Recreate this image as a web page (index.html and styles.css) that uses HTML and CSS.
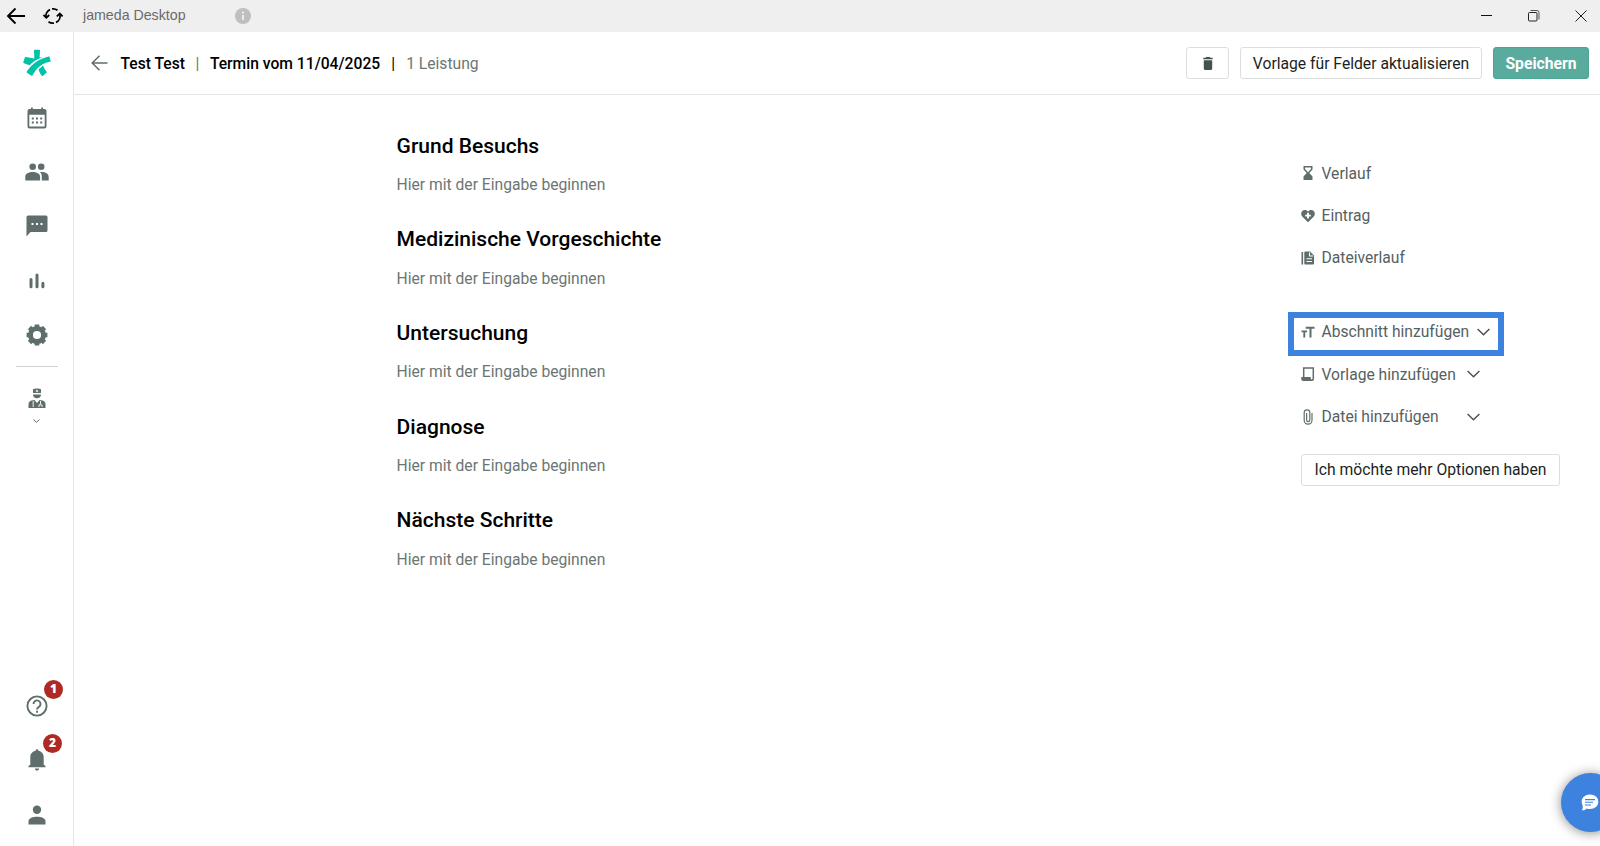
FILE: index.html
```html
<!DOCTYPE html>
<html lang="de">
  <head>
    <meta charset="UTF-8" />
    <meta name="viewport" content="width=device-width, initial-scale=1.0" />
    <title>jameda Desktop</title>
    <link rel="stylesheet" href="styles.css">
  </head>
  <body>
    <div class="titlebar">
      <svg class="tb-back" width="20" height="18" viewBox="0 0 20 18"><path d="M9.500 1.500 2 9l7.500 7.500M2 9h17" fill="none" stroke="#000" stroke-width="1.900"/></svg>
      <svg class="tb-reload" width="20" height="18" viewBox="0 0 20 18" fill="none" stroke="#000" stroke-width="1.800"><path d="M3.100 10.500A7 7 0 0 1 7 2.600M9 1.900A7 7 0 0 1 14.500 3.300M16.900 7.500A7 7 0 0 1 13 15.400M11 16.100A7 7 0 0 1 5.500 14.700"/><path d="M.4 8 3.300 10.800 6.200 8M13.800 9.300 16.800 6.600 19.600 9.300"/></svg>
      <span class="tb-title">jameda Desktop</span>
      <svg class="tb-info" width="16" height="16" viewBox="0 0 16 16"><circle cx="8" cy="8" r="8" fill="#bfbfbf"/><path d="M8 3.600v1.900M8 7v5" stroke="#efefef" stroke-width="1.900"/></svg>
      <div class="window-buttons">
        <svg width="12" height="12" viewBox="0 0 12 12"><path d="M0 5.500h11" stroke="#111"/></svg>
        <svg width="12" height="12" viewBox="0 0 12 12" fill="none" stroke="#222"><rect x=".5" y="2.500" width="8.500" height="8.500" rx="1"/><path d="M2.500.5H9a2 2 0 0 1 2 2v7" stroke="#555"/></svg>
        <svg width="12" height="12" viewBox="0 0 12 12"><path d="m.5.500 11 11m0-11-11 11" stroke="#222"/></svg>
      </div>
    </div>

    <div class="app">
      <nav class="sidebar">
        <a class="nav-item logo">
          <svg width="28" height="28" viewBox="0 0 28 28"><path d="M11.800.8h4.400c.5 0 .8.300.8.800l-.4 6.900 3.200-.3C14 10 10 12.700 6.600 16.200L.9 14.200c-.5-.2-.7-.5-.6-1L1.800 8.500c.2-.5.500-.7 1-.6l8.500 1.600L11 1.600c0-.5.300-.8.800-.8z"/><path d="M26.300 7.200 27.800 12.400C19 14 13.500 18.500 9.600 26.300c-.3.600-.7.700-1.200.4L4 23.700c-.5-.4-.6-.8-.2-1.300C9 14.500 15.500 10 26.300 7.200z"/><path d="M20 16.500c.9 2.500 2.200 4.500 4 6.700L20 26.800c-.4.300-.8.300-1.100 0-1.500-1.700-2.600-3.800-3.400-6.300z"/></svg>
        </a>
        <a class="nav-item">
          <svg width="20" height="22" viewBox="0 0 20 22"><path d="M4 .5h1.800V2h8.400V.5H16V2h1.500A2 2 0 0 1 19.500 4v15.500a2 2 0 0 1-2 2h-15a2 2 0 0 1-2-2V4a2 2 0 0 1 2-2H4zM2.300 7.800v11.800h15.400V7.800z" fill-rule="evenodd"/><path d="M4.800 10.500h2v2h-2zm4.200 0h2v2H9zm4.200 0h2v2h-2zm-8.400 4h2v2h-2zm4.200 0h2v2H9zm4.200 0h2v2h-2z"/></svg>
        </a>
        <a class="nav-item">
          <svg width="24" height="18" viewBox="0 0 24 18"><circle cx="7.700" cy="3.700" r="3.300"/><circle cx="16.200" cy="3.700" r="3.300"/><path d="M.3 17.500v-3.800C.3 10.500 4 9 7.700 9s7.400 1.500 7.400 4.700v3.800zM15 9c5-.4 8.700 1.300 8.700 4.700v3.800h-6.900v-3.800c0-2-.6-3.500-1.800-4.700z"/></svg>
        </a>
        <a class="nav-item">
          <svg width="22" height="22" viewBox="0 0 22 22"><path d="M2 .5h18a1.500 1.500 0 0 1 1.500 1.500v13.500A1.500 1.500 0 0 1 20 17H4.500L.5 21.500V2A1.500 1.500 0 0 1 2 .5z"/><path d="M5.500 8h2v2h-2zm4.500 0h2v2h-2zm4.500 0h2v2h-2z" fill="#fff"/></svg>
        </a>
        <a class="nav-item">
          <svg width="16" height="16" viewBox="0 0 16 16" stroke="#5f6e6c" stroke-width="3" stroke-linecap="round"><path d="M2 6.500v7.300M8 2v11.800M13.900 10.300v3.500"/></svg>
        </a>
        <a class="nav-item">
          <svg class="outline" width="22" height="22" viewBox="0 0 22 22" stroke="#5f6e6c"><circle cx="11" cy="11" r="6.600" stroke-width="5"/><path d="M11 .6v4M11 17.400v4M.6 11h4M17.400 11h4M3.500 3.500l2.800 2.800M15.700 15.700l2.800 2.800M3.500 18.500l2.800-2.800M15.700 6.300l2.800-2.800" stroke-width="4.600"/></svg>
        </a>
        <hr class="nav-divider" />
        <a class="nav-item doctor">
          <svg width="18" height="20" viewBox="0 0 18 20"><path d="M5 1.200C7 .2 11 .2 13 1.200V5H5zM5 6.400h8C13 9 11 10.200 9 10.200S5 9 5 6.400zM3.500 12.500 6.500 12 9 15l2.500-3 3 .5c2 .5 3 2 3 4V20H.5v-3.500c0-2 1-3.500 3-4z"/><path d="M9 1.800v2.400M7.800 3h2.400M5.200 13v6M12.500 13v3M11 19v-2.200h3V19" fill="none" stroke="#fff" stroke-width=".9"/></svg>
          <svg class="outline" width="7" height="4" viewBox="0 0 7 4"><path d="m.5.500 3 2.800 3-2.800" stroke="#5f6e6c" stroke-width="1"/></svg>
        </a>
        <div class="nav-bottom">
          <a class="nav-item">
            <svg class="outline" width="22" height="22" viewBox="0 0 22 22" stroke="#5f6e6c" stroke-width="1.900"><circle cx="11" cy="11" r="9.600"/><path d="M7.500 9a3.500 3.500 0 1 1 5.600 2.700c-1.200.9-2.100 1.400-2.100 2.700M11 15.800v1.900"/></svg>
            <span class="badge">1</span>
          </a>
          <a class="nav-item">
            <svg width="18" height="22" viewBox="0 0 18 22"><path d="M9 .3c.9 0 1.300.6 1.300 1.500 3.300.6 5.400 3 5.400 6.200V15.800l1.800 1.200v1.200H.5V17l1.800-1.200V8c0-3.200 2.100-5.600 5.400-6.200C7.700.9 8.100.3 9 .3zM7 19.400h4c0 1.300-.8 2.200-2 2.200s-2-.9-2-2.200z"/></svg>
            <span class="badge badge-bell">2</span>
          </a>
          <a class="nav-item">
            <svg width="18" height="20" viewBox="0 0 18 20"><circle cx="9" cy="4.800" r="4.200"/><path d="M.5 19.500v-3C.5 13 5 11.700 9 11.700s8.500 1.300 8.500 4.800v3z"/></svg>
          </a>
        </div>
      </nav>

      <div class="page">
        <header class="header">
          <svg class="back" width="17" height="16" viewBox="0 0 17 16"><path d="M8.500.7 1.200 8l7.300 7.300M1.200 8H16.500" fill="none" stroke="#5f6e6c" stroke-width="1.500"/></svg>
          <span class="patient">Test Test</span>
          <span class="sep">|</span>
          <span class="visit">Termin vom 11/04/2025</span>
          <span class="sep dark">|</span>
          <span class="service">1 Leistung</span>
          <div class="actions">
            <button class="btn btn-trash"><svg width="10" height="13" viewBox="0 0 10 13" fill="#46524f"><path d="M3 0h4v.8h2.700v1.500H.3V.8H3zM.8 3.200h8.400v8.300A1.500 1.500 0 0 1 7.700 13H2.300a1.500 1.500 0 0 1-1.500-1.500z"/></svg></button>
            <button class="btn btn-template">Vorlage für Felder aktualisieren</button>
            <button class="btn btn-save">Speichern</button>
          </div>
        </header>

        <div class="content">
          <main class="sections">
            <section>
              <h2>Grund Besuchs</h2>
              <p>Hier mit der Eingabe beginnen</p>
            </section>
            <section>
              <h2>Medizinische Vorgeschichte</h2>
              <p>Hier mit der Eingabe beginnen</p>
            </section>
            <section>
              <h2>Untersuchung</h2>
              <p>Hier mit der Eingabe beginnen</p>
            </section>
            <section>
              <h2>Diagnose</h2>
              <p>Hier mit der Eingabe beginnen</p>
            </section>
            <section>
              <h2>Nächste Schritte</h2>
              <p>Hier mit der Eingabe beginnen</p>
            </section>
          </main>

          <aside class="tools">
            <div class="tool">
              <svg width="14" height="14" viewBox="0 0 14 14"><path d="M2.500 0h9v3.500L8.300 7l3.200 3.500V14h-9v-3.500L5.700 7 2.500 3.500zM4 1.400V3l3 3.200L10 3V1.400z" fill-rule="evenodd"/></svg>
              <span>Verlauf</span>
            </div>
            <div class="tool">
              <svg width="14" height="14" viewBox="0 0 14 14"><path d="M7 13.200 1.200 7.500C-1 4.800.6 1 3.800 1 5.200 1 6.300 1.600 7 2.600 7.700 1.600 8.800 1 10.200 1c3.200 0 4.800 3.800 2.600 6.500z"/><path d="M7 3.800v5.600M4.200 6.600h5.600" stroke="#fff" stroke-width="1.900"/></svg>
              <span>Eintrag</span>
            </div>
            <div class="tool">
              <svg width="14" height="14" viewBox="0 0 14 14"><path d="M.5 1h1.600v12.500H.5zM4.300.5H9l4 4v8a1 1 0 0 1-1 1H4.300a1 1 0 0 1-1-1v-11a1 1 0 0 1 1-1z"/><path d="M8.500 1.500v3.500H12M5.500 7.800h5.500M5.500 10.500h5.500" fill="none" stroke="#fff" stroke-width="1.100"/></svg>
              <span>Dateiverlauf</span>
            </div>

            <div class="tool highlight">
              <svg width="14" height="14" viewBox="0 0 14 14" fill="none" stroke="#5f6e6c"><path d="M4.700 2.800H13.500M9.500 2.800V12.500" stroke-width="2"/><path d="M.5 6.400h5.500M3.300 6.400v6.100" stroke-width="1.900"/></svg>
              <span>Abschnitt hinzufügen</span>
              <svg class="chevron" width="13" height="8" viewBox="0 0 13 8"><path d="m.6.900 5.900 5.900L12.400.9" fill="none" stroke="#46524f" stroke-width="1.400"/></svg>
            </div>
            <div class="tool">
              <svg width="14" height="14" viewBox="0 0 14 14"><path d="M2.700 10V1h9.600v11" fill="none" stroke="#5f6e6c" stroke-width="1.500"/><path d="M.3 10h9.500v2c0 .6 1.300.6 1.300 0H13c0 1.300-.8 2-2 2H2.500C1 14 .3 13 .3 12z"/></svg>
              <span>Vorlage hinzufügen</span>
              <svg class="chevron" width="13" height="8" viewBox="0 0 13 8"><path d="m.6.900 5.900 5.900L12.400.9" fill="none" stroke="#46524f" stroke-width="1.400"/></svg>
            </div>
            <div class="tool">
              <svg width="14" height="16" viewBox="0 0 14 16" fill="none" stroke="#5f6e6c" stroke-width="1.200"><path d="M11 4v7.300a3.900 3.900 0 0 1-7.800 0V3.600a2.800 2.800 0 0 1 5.600 0V11a1.600 1.600 0 0 1-3.200 0V4"/></svg>
              <span>Datei hinzufügen</span>
              <svg class="chevron" width="13" height="8" viewBox="0 0 13 8"><path d="m.6.900 5.900 5.900L12.400.9" fill="none" stroke="#46524f" stroke-width="1.400"/></svg>
            </div>

            <button class="btn btn-more">Ich möchte mehr Optionen haben</button>
          </aside>
        </div>
      </div>
    </div>

    <div class="chat-bubble">
      <svg width="18" height="17" viewBox="0 0 18 17"><path d="M9 .5c4.700 0 8.300 3 8.300 7.300S13.700 15 9 15c-1.200 0-2.300-.2-3.300-.6C4.500 15.800 2.800 16.400.8 16.200 1.700 15 1.900 13.800 1.700 11.600 1 10.400.7 9.200.7 7.800.7 3.500 4.300.5 9 .5z" fill="#fff"/><path d="M4 5.600h10M4 8.300h8M4 11h6" stroke="#3d82df" stroke-width="1.100"/></svg>
    </div>
  </body>
</html>
```
FILE: styles.css
```css
* {
  box-sizing: border-box;
}
body {
  margin: 0;
  height: 846px;
  overflow: hidden;
  background: #fff;
  color: #000;
  font-family: Roboto, sans-serif;
  font-size: 15.65px;
}
svg {
  display: block;
  flex: none;
}
.titlebar {
  display: flex;
  align-items: center;
  height: 31px;
  padding: 0 13px 0 6px;
  background: #efefef;
}
.tb-reload {
  margin-left: 17px;
}
.tb-title {
  width: 152px;
  margin-left: 20px;
  font-family: 'Liberation Sans', sans-serif;
  font-size: 14.2px;
  line-height: 16px;
  padding-bottom: 1px;
  color: #6a6a6a;
}
.window-buttons {
  display: flex;
  gap: 35px;
  margin-left: auto;
}
.app {
  display: flex;
  height: 815px;
  border-top: 1px solid #efefef;
}
.sidebar {
  display: flex;
  flex-direction: column;
  width: 74px;
  padding-top: 4px;
  border-right: 1px solid #e6e6e6;
}
.nav-item {
  position: relative;
  display: flex;
  align-items: center;
  justify-content: center;
  height: 54.4px;
}
.nav-item svg {
  fill: #5f6e6c;
}
.nav-item.logo svg {
  fill: #00c3a5;
}
.nav-item svg.outline {
  fill: none;
}
.nav-divider {
  width: 42px;
  height: 1px;
  margin: 4px auto 0;
  border: 0;
  background: #cfd3d2;
}
.doctor {
  flex-direction: column;
  gap: 11px;
  height: 76px;
}
.nav-bottom {
  margin-top: auto;
  padding-bottom: 4px;
}
.badge {
  position: absolute;
  top: 1px;
  left: 44px;
  width: 19px;
  height: 19px;
  border-radius: 50%;
  background: #b02a24;
  color: #fff;
  font-family: 'Open Sans', sans-serif;
  font-size: 12px;
  font-weight: 800;
  line-height: 18px;
  text-align: center;
}
.badge-bell {
  left: 43px;
}
.page {
  flex: 1;
}
.header {
  display: flex;
  align-items: center;
  height: 63px;
  padding: 0 11px 0 17px;
  border-bottom: 1px solid #e4e4e4;
}
.patient {
  margin-left: 12.5px;
  font-weight: 500;
}
.sep {
  width: 25px;
  text-align: center;
  color: #6b7674;
}
.sep.dark {
  color: #000;
  width: 26px;
}
.visit {
  font-weight: 500;
}
.service {
  color: #6b7674;
}
.actions {
  display: flex;
  gap: 11px;
  margin-left: auto;
}
.btn {
  display: flex;
  align-items: center;
  justify-content: center;
  height: 32px;
  padding: 0;
  background: #fff;
  border: 1px solid #dcdfde;
  border-radius: 3px;
  color: #1a1f1e;
  font-family: inherit;
  font-size: 15.7px;
  white-space: nowrap;
}
.btn-trash {
  width: 43px;
}
.btn-template {
  width: 242px;
}
.btn-save {
  width: 96px;
  background: #59ab9d;
  border-color: #4aa593;
  color: #fff;
  font-weight: 700;
}
.content {
  display: flex;
  justify-content: space-between;
  padding: 0 40px 0 322.6px;
}
.sections {
  padding-top: 37.8px;
}
section {
  height: 93.6px;
}
h2 {
  margin: 0;
  font-size: 21px;
  font-weight: 500;
  line-height: 26px;
}
p {
  margin: 16.4px 0 0;
  line-height: 20px;
  color: #6b7674;
}
.tools {
  width: 259px;
  padding-top: 57px;
}
.tool {
  display: flex;
  align-items: center;
  width: 179px;
  height: 42.4px;
  color: #56615f;
  fill: #5f6e6c;
}
.tool span {
  margin-left: 6.5px;
  white-space: nowrap;
}
.chevron {
  margin-left: auto;
}
.highlight {
  width: 216px;
  height: 44px;
  margin: 33px 0 -3px -13px;
  padding: 0 8px 5px 7px;
  border: 6px solid #3d82df;
}
.btn-more {
  width: 259px;
  margin-top: 16px;
}
.chat-bubble {
  position: absolute;
  top: 773px;
  left: 1561px;
  display: flex;
  align-items: center;
  width: 59px;
  height: 59px;
  padding-left: 20px;
  border-radius: 50%;
  background: #3d82df;
  box-shadow: 0 1px 12px rgba(0, 0, 0, 0.45);
}
```
